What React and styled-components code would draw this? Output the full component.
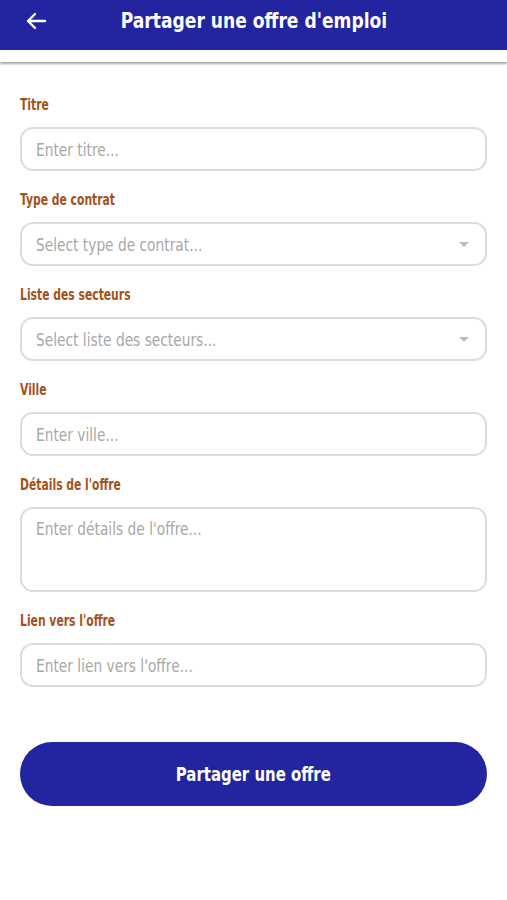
import React from "react";
import styled, { createGlobalStyle } from "styled-components";

const GlobalStyle = createGlobalStyle`
  body {
    margin: 0;
    background: #ffffff;
    font-family: "DejaVu Sans Condensed", "DejaVu Sans", sans-serif;
  }
`;

const Page = styled.div`
  width: 507px;
  min-height: 900px;
  background: #fff;
`;

// the reference uses a narrow display face; squeeze DejaVu Condensed to match
const Narrow = styled.span`
  display: inline-block;
  white-space: nowrap;
  transform: scaleX(${p => p.$scale || 0.85});
  transform-origin: ${p => p.$origin || "left"} center;
`;

const Header = styled.header`
  height: 50px;
  background: #22259f;
  display: flex;
  align-items: center;
  justify-content: center;
  position: relative;
`;

const BackButton = styled.button`
  position: absolute;
  left: 22px;
  top: 9px;
  width: 28px;
  height: 24px;
  padding: 0;
  border: none;
  background: transparent;
  display: flex;
  align-items: center;
  justify-content: center;
`;

const Title = styled.h1`
  margin: 0 0 10px;
  color: #fff;
  font-size: 22px;
  font-weight: 700;
`;

const SubBar = styled.div`
  height: 12px;
  background: #fff;
  box-shadow: 0 2px 2px rgba(0, 0, 0, 0.35);
`;

const Form = styled.form`
  padding: 33px 20px 0;
  display: flex;
  flex-direction: column;
`;

const Field = styled.div`
  display: flex;
  flex-direction: column;
  margin-bottom: 19px;
`;

const Label = styled.label`
  color: #a3521c;
  font-size: 15px;
  font-weight: 700;
  line-height: 20px;
  margin-bottom: 12px;
`;

const InputBox = styled.div`
  height: ${p => (p.$tall ? 85 : 44)}px;
  box-sizing: border-box;
  border: 2.5px solid #dcdcdc;
  border-radius: 13px;
  display: flex;
  align-items: ${p => (p.$tall ? "flex-start" : "center")};
  padding: ${p => (p.$tall ? "9px 14px" : "0 14px")};
`;

const Placeholder = styled.span`
  color: #a7a7a7;
  font-size: 18px;
  flex: 1;
`;

const Caret = styled.span`
  width: 0;
  height: 0;
  border-left: 5px solid transparent;
  border-right: 5px solid transparent;
  border-top: 5px solid #bcbcbc;
  margin-right: 2px;
`;

const SubmitButton = styled.button`
  margin-top: 36px;
  height: 64px;
  border: none;
  border-radius: 32px;
  background: #22259f;
  color: #fff;
  font-family: inherit;
  font-size: 20px;
  font-weight: 700;
`;

const fields = [
  { label: "Titre", placeholder: "Enter titre..." },
  { label: "Type de contrat", placeholder: "Select type de contrat...", select: true },
  { label: "Liste des secteurs", placeholder: "Select liste des secteurs...", select: true },
  { label: "Ville", placeholder: "Enter ville..." },
  { label: "Détails de l'offre", placeholder: "Enter détails de l'offre...", tall: true },
  { label: "Lien vers l'offre", placeholder: "Enter lien vers l'offre..." }
];

export default function App() {
  return (
    <Page>
      <GlobalStyle />
      <Header>
        <BackButton aria-label="Retour">
          <svg width="22" height="18" viewBox="0 0 22 18" fill="none">
            <path
              d="M20 9H3M10 2L3 9l7 7"
              stroke="#fff"
              strokeWidth="2.4"
              strokeLinecap="round"
              strokeLinejoin="round"
            />
          </svg>
        </BackButton>
        <Title>
          <Narrow $scale={0.865} $origin="center">
            Partager une offre d'emploi
          </Narrow>
        </Title>
      </Header>
      <SubBar />
      <Form onSubmit={e => e.preventDefault()}>
        {fields.map(f => (
          <Field key={f.label}>
            <Label>
              <Narrow $scale={0.8}>{f.label}</Narrow>
            </Label>
            <InputBox $tall={f.tall}>
              <Placeholder>
                <Narrow $scale={0.85}>{f.placeholder}</Narrow>
              </Placeholder>
              {f.select && <Caret />}
            </InputBox>
          </Field>
        ))}
        <SubmitButton type="submit">
          <Narrow $scale={0.83} $origin="center">
            Partager une offre
          </Narrow>
        </SubmitButton>
      </Form>
    </Page>
  );
}
